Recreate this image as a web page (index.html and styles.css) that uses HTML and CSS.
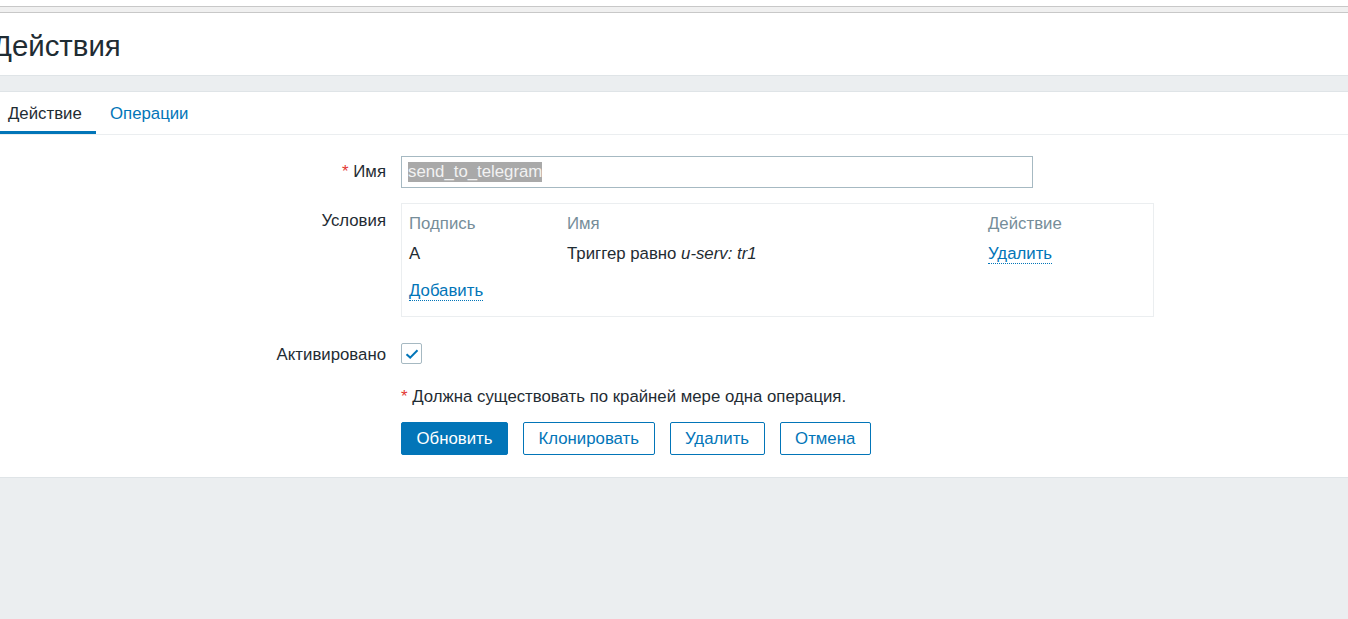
FILE: index.html
```html
<!DOCTYPE html>
<html lang="ru">
<head>
<meta charset="utf-8">
<title>Действия</title>
<link rel="stylesheet" href="styles.css">
</head>
<body>
<div class="topstrip"><div class="topstrip-band"></div></div>
<header class="header">
  <h1 class="title">Действия</h1>
</header>
<div class="spacer"></div>
<main class="content">
  <nav class="tabs">
    <a class="tab tab-active">Действие</a>
    <a class="tab">Операции</a>
  </nav>
  <form class="form">
    <div class="label label-name"><span class="req">*</span> Имя</div>
    <div class="field">
      <div class="text-input"><span class="selected">send_to_telegram</span></div>
    </div>

    <div class="label label-cond">Условия</div>
    <div class="field field-cond">
      <div class="cond-box">
        <div class="cond-grid">
          <div class="th">Подпись</div>
          <div class="th">Имя</div>
          <div class="th">Действие</div>
          <div class="td">A</div>
          <div class="td">Триггер равно <em>u-serv: tr1</em></div>
          <div class="td"><a class="link">Удалить</a></div>
        </div>
        <div class="add-row"><a class="link">Добавить</a></div>
      </div>
    </div>

    <div class="label label-check">Активировано</div>
    <div class="field field-check">
      <span class="checkbox">
        <svg width="14" height="12" viewBox="0 0 14 12"><path d="M1.5 6.2 L5.2 9.6 L12.5 2.2" fill="none" stroke="#0275b8" stroke-width="2"/></svg>
      </span>
    </div>

    <div class="label"></div>
    <div class="field notice"><span class="req">*</span> Должна существовать по крайней мере одна операция.</div>

    <div class="label"></div>
    <div class="field buttons">
      <button type="button" class="btn btn-primary">Обновить</button>
      <button type="button" class="btn">Клонировать</button>
      <button type="button" class="btn">Удалить</button>
      <button type="button" class="btn">Отмена</button>
    </div>
  </form>
</main>
</body>
</html>
```

FILE: styles.css
```css
* { box-sizing: border-box; }

body {
  margin: 0;
  background: #ebeef0;
  font-family: "Liberation Sans", Arial, sans-serif;
  font-size: 16.8px;
  color: #1f2c33;
}

.topstrip {
  height: 13px;
  padding-top: 6px;
  background: #fff;
}
.topstrip-band {
  height: 7px;
  background: #f0f0f0;
  border-top: 1px solid #c8c8c8;
  border-bottom: 1px solid #c8c8c8;
}

.header {
  background: #fff;
  height: 63px;
  border-bottom: 1px solid #dfe4e7;
  display: flex;
  align-items: center;
  overflow: hidden;
}

.title {
  margin: 3px 0 0 -8px;
  font-weight: normal;
  font-size: 29.4px;
  line-height: 34px;
  color: #1f2c33;
}

.spacer { height: 15px; }

.content {
  background: #fff;
  border-top: 1px solid #dfe4e7;
  border-bottom: 1px solid #dfe4e7;
  padding-bottom: 22px;
}

.tabs {
  display: flex;
  height: 43px;
  border-bottom: 1px solid #ebeef0;
}

.tab {
  padding: 1px 8px 0;
  line-height: 41px;
  color: #0275b8;
  border-bottom: 3px solid transparent;
  cursor: pointer;
}
.tab + .tab { padding-left: 14px; }
.tab-active {
  color: #1f2c33;
  border-bottom-color: #0275b8;
  width: 96px;
}

.form {
  display: grid;
  grid-template-columns: 386px 1fr;
  column-gap: 15px;
  padding-top: 21px;
}

.label {
  text-align: right;
  line-height: 20px;
}
.label-name { line-height: 32px; }
.label-cond { padding-top: 8px; margin-top: 15px; }
.label-check { margin-top: 27px; line-height: 22px; }

.req { color: #e33734; }

.text-input {
  width: 632px;
  height: 32px;
  border: 1px solid #a6b9c2;
  padding: 0 6px;
  display: flex;
  align-items: center;
}
.selected {
  background: #a9a9a9;
  color: #f2f2f2;
  line-height: 20px;
}

.field-cond { margin-top: 15px; }

.cond-box {
  width: 753px;
  height: 114px;
  border: 1px solid #ebeef0;
  padding: 10px 7px 0 7px;
}

.cond-grid {
  display: grid;
  grid-template-columns: 158px 421px 1fr;
  row-gap: 10px;
  line-height: 20px;
}
.th { color: #768d99; }
.td em { font-style: italic; }

.link {
  color: #0275b8;
  border-bottom: 1px dotted #0275b8;
  cursor: pointer;
}

.add-row {
  margin-top: 17px;
  line-height: 20px;
}

.field-check { margin-top: 26px; }

.checkbox {
  width: 21px;
  height: 21px;
  border: 1px solid #a6b9c2;
  border-radius: 2px;
  display: flex;
  align-items: center;
  justify-content: center;
}

.notice {
  margin-top: 20px;
  line-height: 22px;
}

.buttons {
  margin-top: 14px;
  display: flex;
  gap: 15px;
}

.btn {
  height: 33px;
  padding: 0 14.5px;
  border: 1px solid #0275b8;
  border-radius: 2px;
  background: #fff;
  color: #0275b8;
  font-family: inherit;
  font-size: 16.8px;
}
.btn-primary {
  background: #0275b8;
  color: #fff;
}
```
